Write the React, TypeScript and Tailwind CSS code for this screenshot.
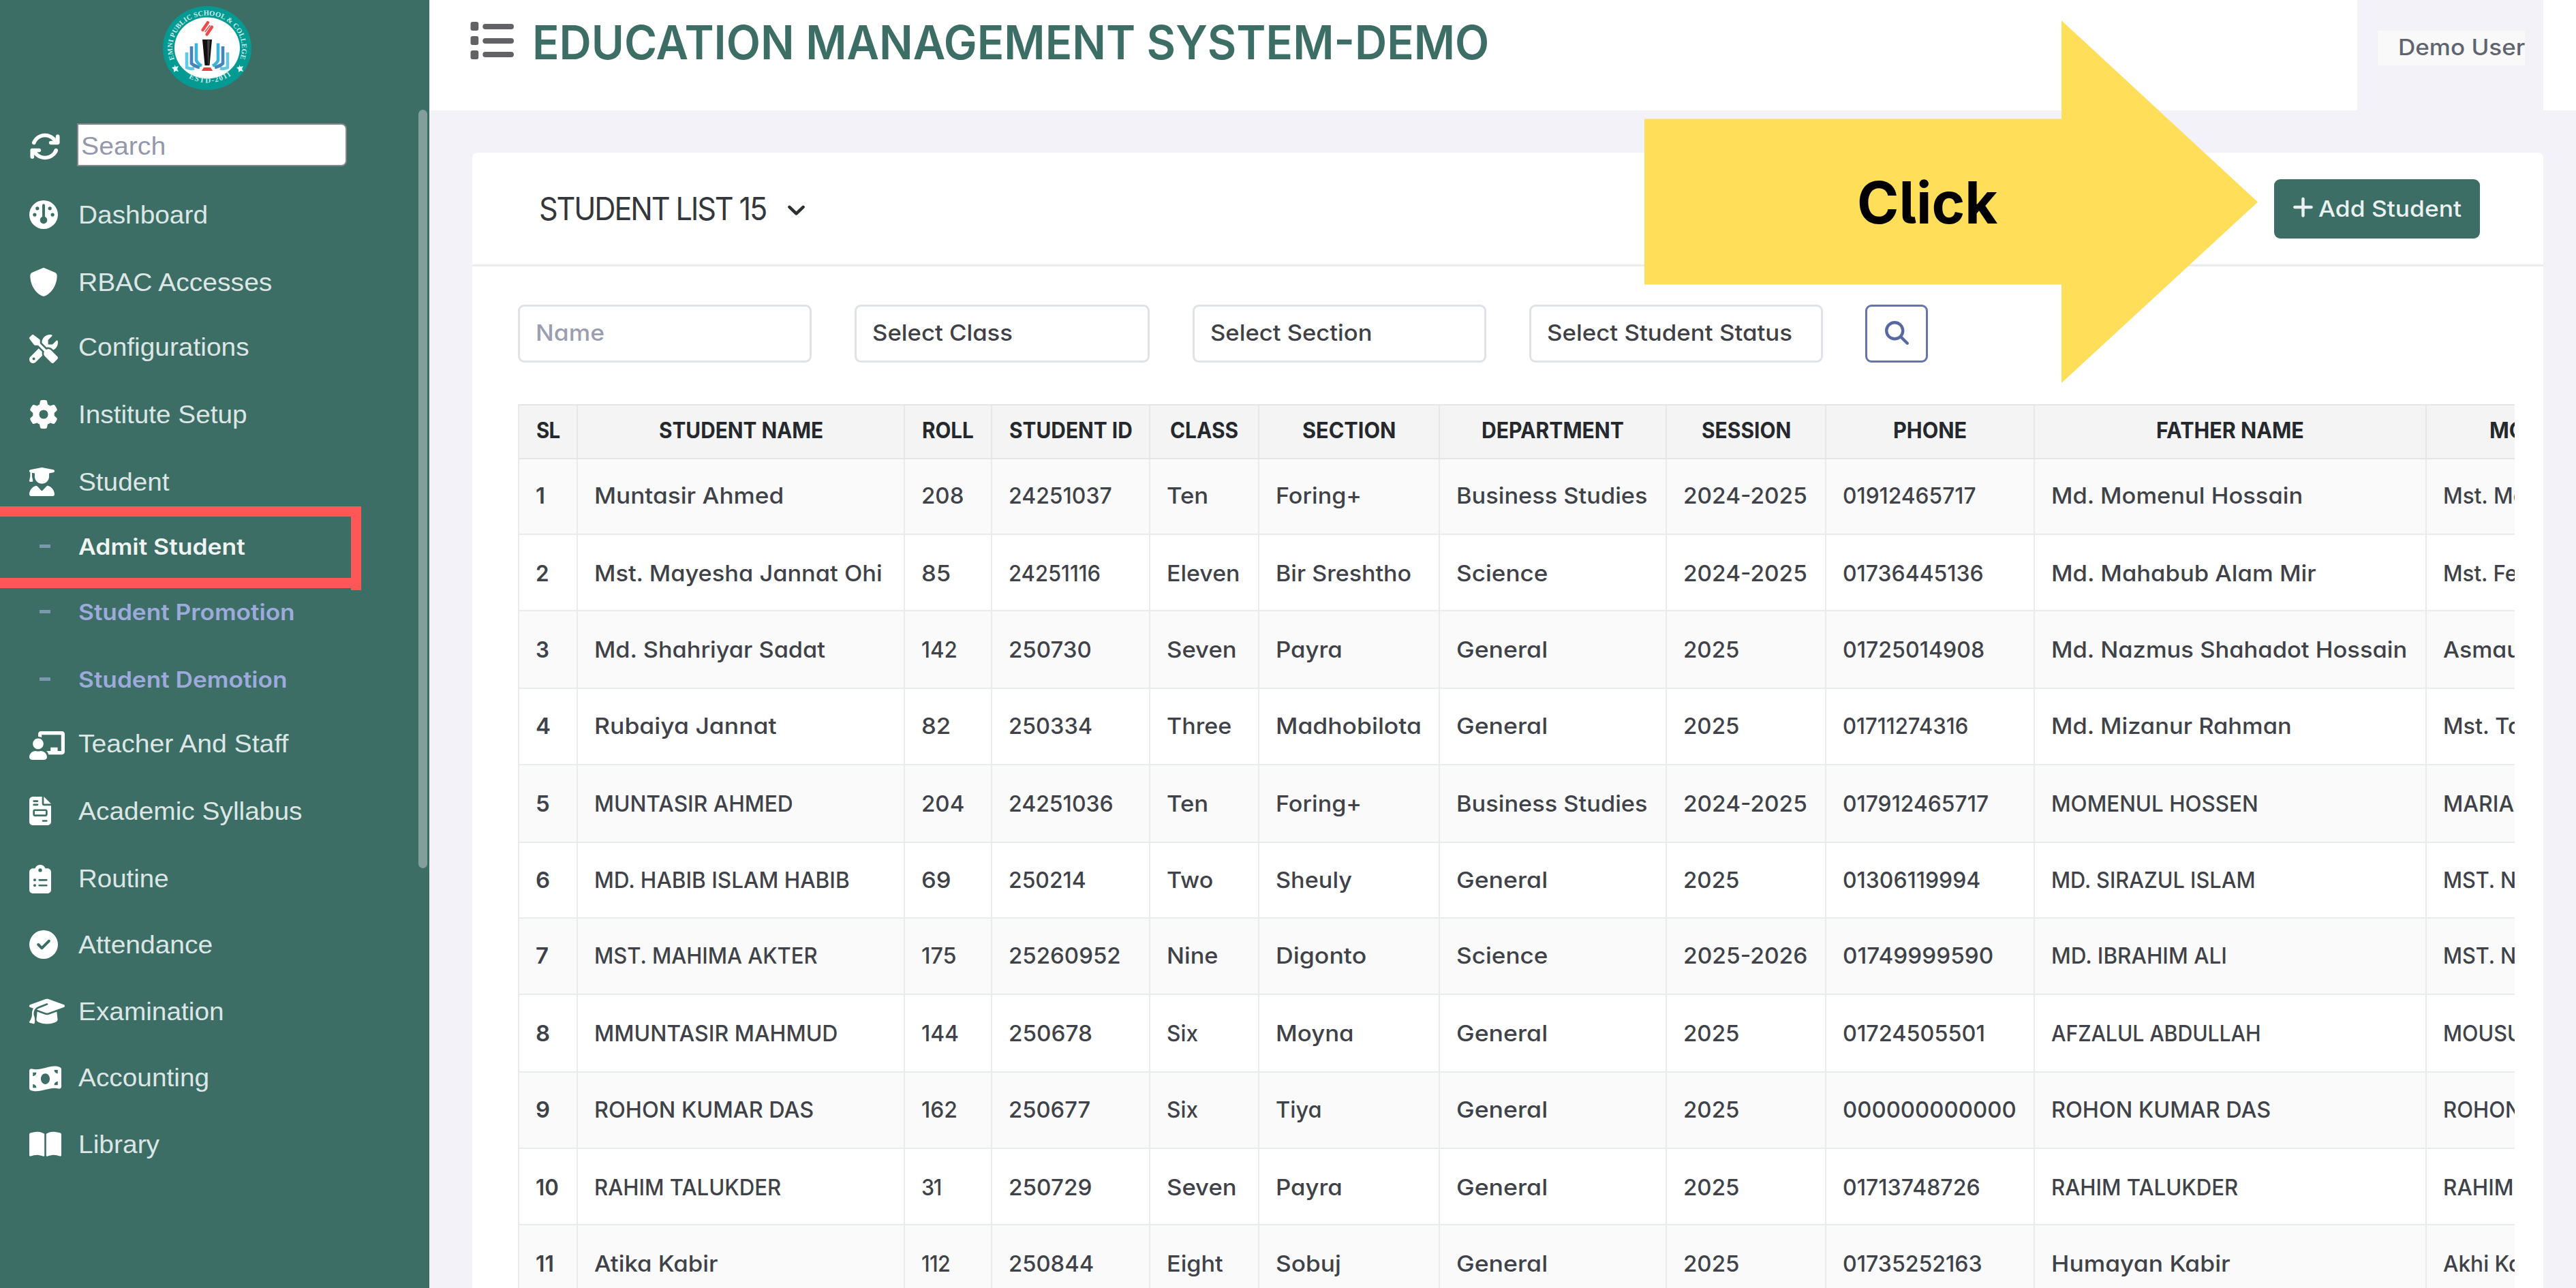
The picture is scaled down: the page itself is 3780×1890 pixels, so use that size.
import { useLayoutEffect, useRef, useState } from "react";
import type { IconType } from "react-icons";
import {
  FaArrowsRotate,
  FaBookOpen,
  FaChevronDown,
  FaCircleCheck,
  FaClipboardList,
  FaFileInvoice,
  FaGauge,
  FaGear,
  FaGraduationCap,
  FaMagnifyingGlass,
  FaMoneyBillWave,
  FaPlus,
  FaScrewdriverWrench,
  FaShield,
  FaUserGraduate,
} from "react-icons/fa6";
import { FaChalkboardTeacher } from "react-icons/fa";

const INTER = "font-['Inter','Open_Sans',sans-serif] [font-feature-settings:'cv11'_1]";
const LIBERATION = "font-['Liberation_Sans',Arial,sans-serif]";

/* A single line of text stretched to an exact width. */
function Fit({ children, w, className = "" }: { children: string; w: number; className?: string }) {
  const ref = useRef<HTMLSpanElement>(null);
  const [fit, setFit] = useState({ scale: 1, spacing: 0 });
  useLayoutEffect(() => {
    const el = ref.current;
    if (!el) return;
    const natural = el.scrollWidth;
    const target = w + 2;
    const scale = Math.min(1.14, Math.max(0.92, target / natural));
    const spacing = (target / scale - natural) / Math.max(1, children.length - 1);
    setFit({ scale, spacing });
  }, [children, w]);
  return (
    <span className={`-mx-px block shrink-0 leading-none ${className}`} style={{ width: w + 2 }}>
      <span
        ref={ref}
        className="block w-max origin-left whitespace-pre"
        style={{ transform: `scaleX(${fit.scale})`, letterSpacing: `${fit.spacing}px` }}
      >
        {children}
      </span>
    </span>
  );
}

function Logo() {
  return (
    <svg className="mt-[9px] ml-[239px] block h-[123px] w-[130px]" viewBox="239 9 130 123" preserveAspectRatio="none">
      <defs>
        <path id="ringTop" d="M 256.5 88 A 51 48 0 1 1 351.5 88" />
        <path id="ringBottom" d="M 264 105 A 58 56 0 0 0 346 105" />
      </defs>
      <ellipse cx="304" cy="70.5" rx="65" ry="61.5" fill="#029a92" />
      <ellipse cx="304" cy="70.5" rx="48" ry="45" fill="#fff" />
      <text fill="#c9ebe8" fontSize="10.5" fontFamily="Liberation Serif, serif" fontWeight="700">
        <textPath href="#ringTop" startOffset="1" textLength="188">EMNI PUBLIC SCHOOL &amp; COLLEGE</textPath>
      </text>
      <text fill="#c9ebe8" fontSize="11" fontFamily="Liberation Serif, serif" fontWeight="700">
        <textPath href="#ringBottom" startOffset="16" textLength="66">ESTD-2011</textPath>
      </text>
      <g fill="#e4f6f4">
        <path d="M256 95l2 3 4-1-2 4 2 4-4-1-3 2v-4l-3-3 4-1z" />
        <path d="M351 95l2 3 4-1-2 4 2 4-4-1-3 2v-4l-3-3 4-1z" />
      </g>
      <g stroke="#ee4a4a" strokeWidth="4.4" strokeLinecap="round">
        <path d="M297.500 44l7.500-11" />
        <path d="M301 46.500l7-9" strokeWidth="1.500" />
        <path d="M303.500 50.500l7.500-11" />
      </g>
      <path d="M297 58h14l-3.500 38h-7z" fill="#111" />
      <path d="M304 59h4l-2 36h-1z" fill="#444" />
      <path d="M299 99h10l3 5h-16z" fill="#e8413f" />
      <g fill="none" strokeWidth="4.600">
        <path d="M274 77v22q5 3 11 1" stroke="#62c8e2" />
        <path d="M281 68v25q4 4 12 6" stroke="#4584bd" />
        <path d="M288 63.500v25q2 5 8 8" stroke="#3bb3da" />
        <path d="M334 77v22q-5 3-11 1" stroke="#62c8e2" />
        <path d="M327 68v25q-4 4-12 6" stroke="#4584bd" />
        <path d="M320 63.500v25q-2 5-8 8" stroke="#3bb3da" />
      </g>
    </svg>
  );
}

type NavEntry = { label: string; w: number; row: string; icon?: IconType; size?: string; tone?: string };

const nav: NavEntry[] = [
  { label: "Dashboard", w: 188, row: "h-[99px]", icon: FaGauge, size: "w-[42px]" },
  { label: "RBAC Accesses", w: 282, row: "h-[95px]", icon: FaShield, size: "w-[42px]" },
  { label: "Configurations", w: 249, row: "h-[99px]", icon: FaScrewdriverWrench, size: "w-[42px] mt-[5px]" },
  { label: "Institute Setup", w: 246, row: "h-[99px]", icon: FaGear, size: "w-[42px]" },
  { label: "Student", w: 132, row: "h-[95px]", icon: FaUserGraduate, size: "w-[37px]" },
  { label: "Admit Student", w: 243, row: "h-[96px]", tone: "text-[#eff4f3]" },
  { label: "Student Promotion", w: 316, row: "h-[99px]", tone: "text-[#9daadb]" },
  { label: "Student Demotion", w: 305, row: "h-[94px]", tone: "text-[#9daadb]" },
  { label: "Teacher And Staff", w: 306, row: "h-[99px]", icon: FaChalkboardTeacher, size: "w-[52px] mt-[5px]" },
  { label: "Academic Syllabus", w: 327, row: "h-[99px]", icon: FaFileInvoice, size: "w-[32px]" },
  { label: "Routine", w: 131, row: "h-[97px]", icon: FaClipboardList, size: "w-[32px] mt-[2px]" },
  { label: "Attendance", w: 195, row: "h-[98px]", icon: FaCircleCheck, size: "w-[42px]" },
  { label: "Examination", w: 212, row: "h-[97px]", icon: FaGraduationCap, size: "w-[52px]" },
  { label: "Accounting", w: 190, row: "h-[98px]", icon: FaMoneyBillWave, size: "w-[47px] mt-[4px]" },
  { label: "Library", w: 117, row: "h-[98px]", icon: FaBookOpen, size: "w-[47px]" },
];

function Sidebar() {
  return (
    <aside className={`relative h-full w-[630px] shrink-0 bg-[#3c6e66] ${LIBERATION}`}>
      <Logo />
      <div className="mt-[49px] flex h-[63px] items-center">
        <FaArrowsRotate preserveAspectRatio="none" className="mt-[5px] ml-[43px] h-[44px] w-[46px] text-white" />
        <div className="ml-[24px] flex h-[63px] w-[396px] items-center rounded-r-[8px] border-2 border-[#85868f] bg-white pt-[3px] pl-[5px]">
          <Fit w={122} className="text-[37px] text-[#9597ac]">Search</Fit>
        </div>
      </div>
      <nav className="mt-[45px] flex flex-col">
        {nav.map(({ label, w, row, icon: Icon, size, tone }) => (
          <div key={label} className={`${row} shrink-0`}>
            <div className="flex h-[52px] items-center">
              <div className="flex w-[116px] shrink-0 items-center pl-[42.5px] text-white">
                {Icon ? (
                  <Icon preserveAspectRatio="none" className={`h-[42px] ${size}`} />
                ) : (
                  <span className="mb-[2px] ml-[15.500px] h-[5px] w-[16px] bg-[#7a99ae]" />
                )}
              </div>
              {Icon ? (
                <Fit w={w} className="text-[37px] text-[#dce6e4]">{label}</Fit>
              ) : (
                <Fit w={w} className={`mt-[2px] text-[32px] font-semibold ${INTER} ${tone}`}>{label}</Fit>
              )}
            </div>
          </div>
        ))}
      </nav>
      <div className="absolute top-[161px] left-[614px] h-[1113px] w-[13px] rounded-full bg-[#839f9b]" />
      <div className="absolute top-[743px] left-0 h-[120px] w-[530px] border-y-[15px] border-r-[15px] border-[#ff5757]" />
      <div className="absolute top-[863px] left-[515px] h-[3px] w-[15px] bg-[#ff5757]" />
    </aside>
  );
}

function TopBar() {
  return (
    <header className="flex h-[162px] shrink-0 bg-white">
      <svg className="mt-[31px] ml-[60px] h-[57px] w-[64px] text-[#626266]" viewBox="0 0 63 57" preserveAspectRatio="none" fill="currentColor">
        <rect x="0.500" y="1" width="11.500" height="13" rx="3" />
        <rect x="0.500" y="22" width="11.500" height="13" rx="3" />
        <rect x="0.500" y="43" width="11.500" height="13" rx="3" />
        <rect x="18" y="4" width="45" height="8" rx="4" />
        <rect x="18" y="25" width="45" height="8" rx="4" />
        <rect x="18" y="45" width="45" height="8" rx="4" />
      </svg>
      <h1 className="mt-[27.500px] ml-[28px]">
        <Fit w={1402} className="text-[69px] font-semibold text-[#3c6e66]">EDUCATION MANAGEMENT SYSTEM-DEMO</Fit>
      </h1>
      <div className="mr-[48px] ml-auto h-full w-[273px] bg-[#f3f2f9] pt-[45px] pl-[30px]">
        <div className="flex h-[51px] w-[216px] items-center overflow-hidden bg-[#f9f9f9] pb-[2px] pl-[31px]">
          <Fit w={184} className="text-[32px] font-medium text-[#60646f]">Demo User</Fit>
        </div>
      </div>
    </header>
  );
}

const filters = [
  { label: "Name", w: 99, box: "w-[431px]", tone: "text-[#9b9eb0]" },
  { label: "Select Class", w: 204, box: "w-[433px] ml-[63px]", tone: "text-[#3f4146]" },
  { label: "Select Section", w: 236, box: "w-[431px] ml-[63px]", tone: "text-[#3f4146]" },
  { label: "Select Student Status", w: 358, box: "w-[431px] ml-[63px]", tone: "text-[#3f4146]" },
];

const columns: [string, number][] = [
  ["SL", 33],
  ["STUDENT NAME", 239],
  ["ROLL", 74],
  ["STUDENT ID", 179],
  ["CLASS", 98],
  ["SECTION", 135],
  ["DEPARTMENT", 207],
  ["SESSION", 129],
  ["PHONE", 106],
  ["FATHER NAME", 215],
  ["MOTHER NAME", 234],
];

type Cell = [string, number];
type Row = { box: string; cells: Cell[] };

const GENERAL: Cell = ["General", 132];
const SCIENCE: Cell = ["Science", 132];
const BUSINESS: Cell = ["Business Studies", 278];
const Y25: Cell = ["2025", 80];
const Y2425: Cell = ["2024-2025", 180];

const rows: Row[] = [
  { box: "h-[111px] pb-[2px]", cells: [["1", 12], ["Muntasir Ahmed", 276], ["208", 60], ["24251037", 150], ["Ten", 59], ["Foring+", 124], BUSINESS, Y2425, ["01912465717", 194], ["Md. Momenul Hossain", 367], ["Mst. Mo", 120]] },
  { box: "h-[112px] pt-[2px]", cells: [["2", 18], ["Mst. Mayesha Jannat Ohi", 421], ["85", 41], ["24251116", 133], ["Eleven", 106], ["Bir Sreshtho", 197], SCIENCE, Y2425, ["01736445136", 205], ["Md. Mahabub Alam Mir", 387], ["Mst. Fe", 107]] },
  { box: "h-[114px]", cells: [["3", 18], ["Md. Shahriyar Sadat", 337], ["142", 51], ["250730", 120], ["Seven", 101], ["Payra", 96], GENERAL, Y25, ["01725014908", 206], ["Md. Nazmus Shahadot Hossain", 520], ["Asmau", 112]] },
  { box: "h-[112px] pb-[2px]", cells: [["4", 20], ["Rubaiya Jannat", 266], ["82", 41], ["250334", 121], ["Three", 93], ["Madhobilota", 212], GENERAL, Y25, ["01711274316", 182], ["Md. Mizanur Rahman", 351], ["Mst. Ta", 113]] },
  { box: "h-[114px]", cells: [["5", 19], ["MUNTASIR AHMED", 290], ["204", 61], ["24251036", 152], ["Ten", 59], ["Foring+", 124], BUSINESS, Y2425, ["017912465717", 212], ["MOMENUL HOSSEN", 302], ["MARIA", 102]] },
  { box: "h-[111px]", cells: [["6", 19], ["MD. HABIB ISLAM HABIB", 373], ["69", 42], ["250214", 112], ["Two", 66], ["Sheuly", 110], GENERAL, Y25, ["01306119994", 200], ["MD. SIRAZUL ISLAM", 298], ["MST. N", 105]] },
  { box: "h-[112px] pb-[2px]", cells: [["7", 17], ["MST. MAHIMA AKTER", 326], ["175", 50], ["25260952", 163], ["Nine", 74], ["Digonto", 131], SCIENCE, ["2025-2026", 180], ["01749999590", 219], ["MD. IBRAHIM ALI", 256], ["MST. N", 105]] },
  { box: "h-[114px]", cells: [["8", 19], ["MMUNTASIR MAHMUD", 355], ["144", 53], ["250678", 121], ["Six", 44], ["Moyna", 113], GENERAL, Y25, ["01724505501", 207], ["AFZALUL ABDULLAH", 306], ["MOUSU", 115]] },
  { box: "h-[112px] pb-[2px]", cells: [["9", 19], ["ROHON KUMAR DAS", 320], ["162", 51], ["250677", 118], ["Six", 44], ["Tiya", 66], GENERAL, Y25, ["000000000000", 253], ["ROHON KUMAR DAS", 320], ["ROHON", 113]] },
  { box: "h-[112px] pt-[3px]", cells: [["10", 32], ["RAHIM TALUKDER", 272], ["31", 28], ["250729", 120], ["Seven", 101], ["Payra", 96], GENERAL, Y25, ["01713748726", 200], ["RAHIM TALUKDER", 272], ["RAHIM", 101]] },
  { box: "h-[114px]", cells: [["11", 25], ["Atika Kabir", 179], ["112", 41], ["250844", 123], ["Eight", 81], ["Sobuj", 94], GENERAL, Y25, ["01735252163", 203], ["Humayan Kabir", 261], ["Akhi Ka", 114]] },
];

const GRID =
  "grid grid-cols-[86px_480px_128px_232px_160px_265px_333px_234px_306px_575px_422px]";

function StudentTable() {
  return (
    <div className="mt-[61px] h-[1320px] w-[2930px] overflow-hidden">
      <div className="w-[3223px] border-l-2 border-[#e9ebeb]">
        <div className={`${GRID} h-[81px] border-y-2 border-[#e5e5e5] bg-[#f4f4f4]`}>
          {columns.map(([label, w]) => (
            <div key={label} className="flex items-center justify-center border-r-2 border-[#e7e7e7] pb-[4px]">
              <Fit w={w} className="text-[32px] font-bold text-[#25282d]">{label}</Fit>
            </div>
          ))}
        </div>
        {rows.map(({ box, cells }, r) => (
          <div key={r} className={`${GRID} ${r % 2 ? "bg-white" : "bg-[#fafafa]"}`}>
            {cells.map(([text, w], c) => (
              <div key={c} className={`${box} flex items-center border-r-2 border-b-2 border-[#e9ecec] pl-[25px]`}>
                <Fit w={w} className={`text-[33px] text-[#3f4349] ${c === 0 ? "font-semibold" : "font-[450]"}`}>
                  {text}
                </Fit>
              </div>
            ))}
          </div>
        ))}
      </div>
    </div>
  );
}

function StudentCard() {
  return (
    <section className="mt-[62px] mr-[48px] ml-[63px] h-[1680px] rounded-t-[8px] bg-white">
      <div className="flex h-[167px] items-center border-b-[3px] border-[#ebeded] pl-[99px]">
        <Fit w={333} className="mb-[2px] text-[47px] font-normal text-[#34373c]">STUDENT LIST 15</Fit>
        <FaChevronDown
          preserveAspectRatio="none"
          className="mt-[2px] ml-[30px] h-[26px] w-[27px] stroke-[#2c2f33] stroke-[24px] text-[#2c2f33]"
        />
        <button className="mr-[93px] ml-auto flex h-[87px] w-[302px] items-center rounded-[9px] bg-[#3c6e66] pl-[27px] text-[#eaf1f0]">
          <FaPlus preserveAspectRatio="none" className="mb-[5px] h-[36px] w-[31px]" />
          <Fit w={208} className="ml-[7px] text-[33px] font-[450]">Add Student</Fit>
        </button>
      </div>
      <div className="pt-[56px] pl-[67px]">
        <div className="flex h-[85px]">
          {filters.map(({ label, w, box, tone }) => (
            <div key={label} className={`${box} flex items-center rounded-[9px] border-[3px] border-[#dfe2e7] pb-[2px] pl-[24px]`}>
              <Fit w={w} className={`text-[33px] font-[450] ${tone}`}>{label}</Fit>
            </div>
          ))}
          <button className="ml-[62px] flex w-[92px] items-center justify-center rounded-[9px] border-[3px] border-[#6575ab] pb-[2px] text-[#5868a3]">
            <FaMagnifyingGlass preserveAspectRatio="none" className="h-[35px] w-[35px]" />
          </button>
        </div>
        <StudentTable />
      </div>
    </section>
  );
}

function ClickArrow() {
  return (
    <div className="absolute top-[30px] left-[2413px] h-[532px] w-[900px]">
      <svg className="block h-full w-full" viewBox="0 0 900 532">
        <path d="M0 144.500H612V0L900 266.500L612 532V387.500H0Z" fill="#ffde59" />
      </svg>
      <div className="absolute top-[225px] left-[313px]">
        <Fit w={205} className="text-[85px] font-bold text-black [font-feature-settings:'cv05'_1,'ss03'_1]">Click</Fit>
      </div>
    </div>
  );
}

export default function App() {
  return (
    <div className={`relative flex h-[1890px] w-[3780px] overflow-hidden bg-[#f3f2f9] ${INTER}`}>
      <Sidebar />
      <main className="flex h-full w-[3150px] flex-col">
        <TopBar />
        <StudentCard />
      </main>
      <ClickArrow />
    </div>
  );
}
